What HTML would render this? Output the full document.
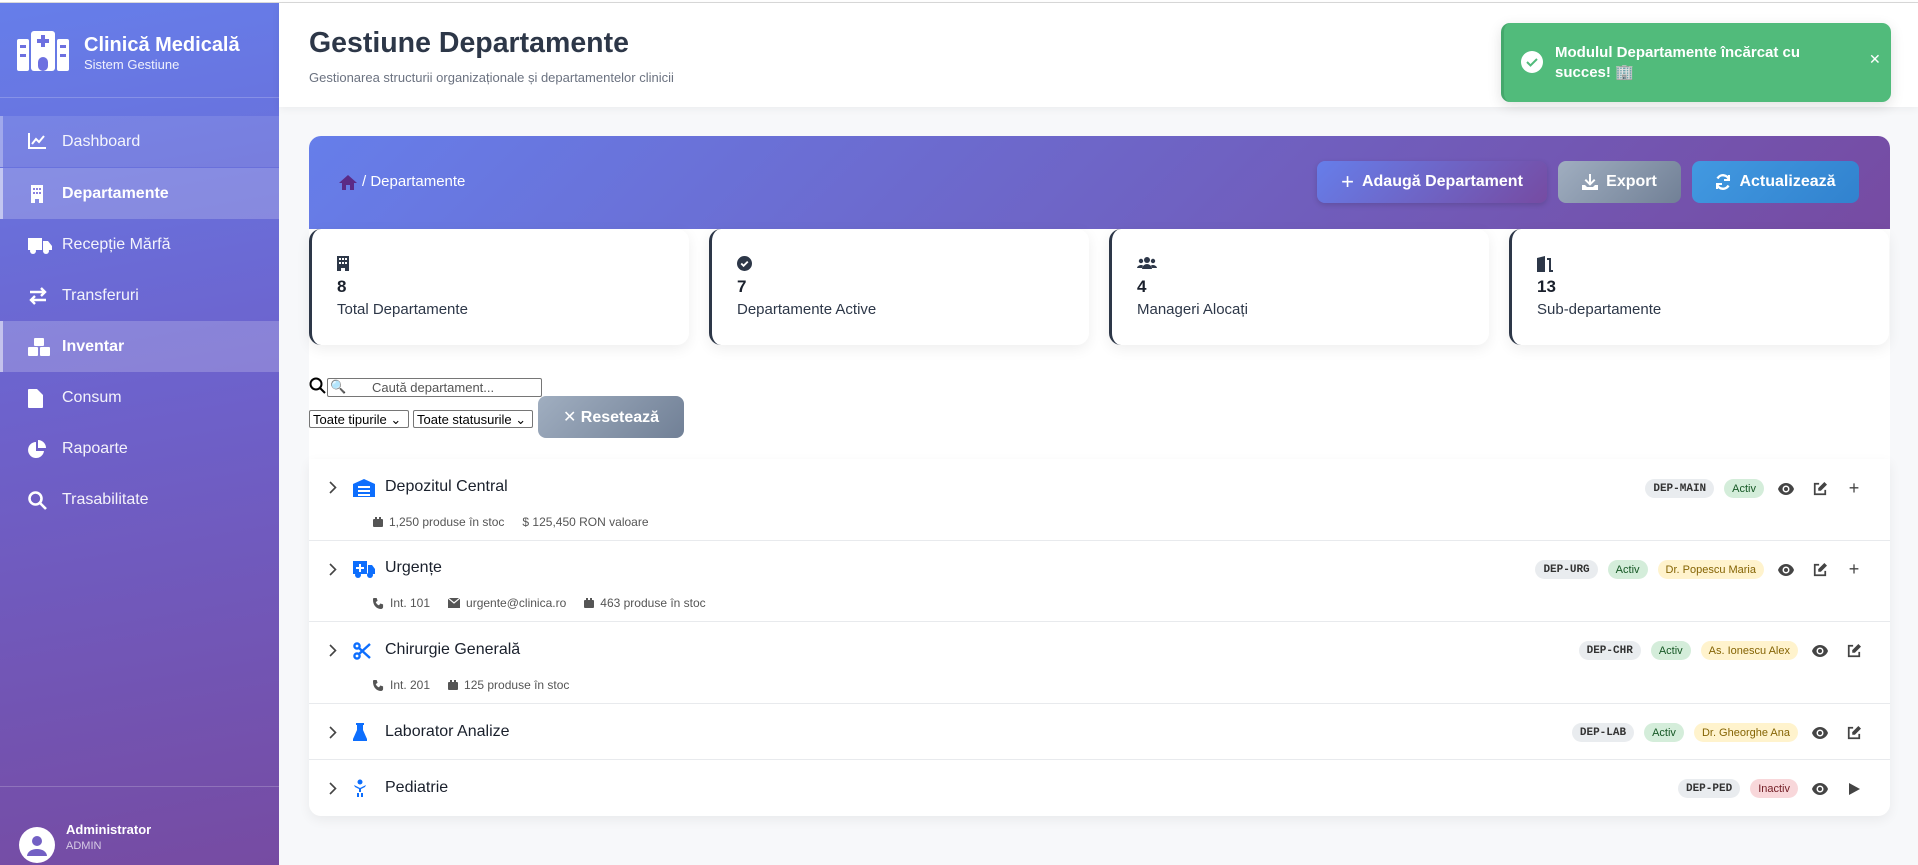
<!DOCTYPE html>
<html><head><meta charset="utf-8"><style>
*{box-sizing:border-box;margin:0;padding:0}
body{width:1918px;height:865px;overflow:hidden;font-family:"Liberation Sans","DejaVu Sans",sans-serif;background:#f7f8fa;position:relative;color:#2d3748}
.sb{position:absolute;left:0;top:3px;width:279px;height:862px;background:linear-gradient(170deg,#667eea 0%,#6d62cc 45%,#764ba2 100%);color:#fff}
.topline{position:absolute;left:0;top:0;width:1918px;height:3px;background:#fff;border-bottom:1px solid #d9d9d9}
.nav{position:absolute;left:0;width:279px;height:51px;display:flex;align-items:center;font-size:16px;color:rgba(255,255,255,.92)}
.nav svg{position:absolute;left:28px;top:17px}
.nav span{position:absolute;left:62px}
.nav.h{background:rgba(255,255,255,.1);box-shadow:inset 3px 0 0 rgba(255,255,255,.3)}
.nav.a{background:rgba(255,255,255,.2);box-shadow:inset 3px 0 0 rgba(255,255,255,.5);font-weight:bold;color:#fff}
.hdr{position:absolute;left:279px;top:3px;width:1639px;height:104px;background:#fff;box-shadow:0 2px 8px rgba(0,0,0,.05)}
.wrap{position:absolute;left:309px;top:136px;width:1581px;height:680px;background:#fff;border-radius:12px}
.ph{position:absolute;left:0;top:0;width:1581px;height:93px;border-radius:12px 12px 0 0;background:linear-gradient(135deg,#667eea,#764ba2)}
.btn{position:absolute;top:25px;height:42px;border-radius:8px;color:#fff;font-weight:bold;font-size:16px;display:flex;align-items:center;justify-content:center;gap:8px}
.stat{position:absolute;top:93px;width:380px;height:116px;background:#fff;border-radius:12px;border-left:3px solid #2d3748;box-shadow:0 4px 14px rgba(0,0,0,.07)}
.stat .ic{position:absolute;left:25px;top:27px}
.stat .n{position:absolute;left:25px;top:48px;font-size:17px;font-weight:bold;color:#1a202c}
.stat .l{position:absolute;left:25px;top:72px;font-size:15px;color:#2d3748}
.list{position:absolute;left:309px;top:459px;width:1581px;height:357px;background:#fff;border-radius:0 0 12px 12px;box-shadow:0 4px 12px rgba(0,0,0,.06)}
.row{position:absolute;left:0;width:1581px;border-bottom:1px solid #e8eaed}
.row .chev{position:absolute;left:20px}
.row .di{position:absolute;left:44px}
.row .nm{position:absolute;left:76px;font-size:16px;color:#1a202c}
.meta{position:absolute;left:64px;font-size:12px;color:#555;display:flex;gap:18px;align-items:center}
.meta span{display:flex;align-items:center;gap:6px}
.rt{position:absolute;right:24px;display:flex;align-items:center;gap:10px}
.b{height:19px;border-radius:10px;padding:0 8px;font-size:11px;display:flex;align-items:center}
.code{background:#e9ecef;color:#333;font-family:"Liberation Mono",monospace;font-weight:bold}
.ok{background:#d4edda;color:#155724}
.mg{background:#fff3cd;color:#856404}
.in{background:#f8d7da;color:#721c24}
.ib{width:24px;display:flex;justify-content:center;color:#444}
.ib:first-of-type{margin-left:4px}
</style></head><body>
<svg width="0" height="0" style="position:absolute"><defs>
<symbol id="eye" viewBox="0 0 16 12"><path d="M8 0C4 0 1 3 0 6c1 3 4 6 8 6s7-3 8-6c-1-3-4-6-8-6z" fill="#444"/><circle cx="8" cy="6" r="3.5" fill="#fff"/><circle cx="8" cy="6" r="2" fill="#444"/></symbol>
<symbol id="ed" viewBox="0 0 16 16"><path d="M7 2H2v12h12V9" fill="none" stroke="#444" stroke-width="2"/><path d="M13 0l3 3-7 7H6V7z" fill="#444"/></symbol>
<symbol id="box" viewBox="0 0 10 10"><rect x="0" y="2" width="10" height="8" rx="1" fill="#555"/><rect x="2" y="0" width="2" height="3" fill="#555"/><rect x="6" y="0" width="2" height="3" fill="#555"/></symbol>
<symbol id="ph" viewBox="0 0 12 12"><path d="M1 0l3 0 1 3-2 1.5c1 2 2 3 3.5 3.5L8 6l3 1 0 3c0 1-1 2-2 2C4 12 0 8 0 2 0 1 0 0 1 0z" fill="#555"/></symbol>
<symbol id="mail" viewBox="0 0 12 10"><path d="M0 0h12v10H0z" fill="#555"/><path d="M0 0l6 5 6-5" stroke="#fff" stroke-width="1.2" fill="none"/></symbol>
</defs></svg>
<div class="topline"></div>
<div class="sb">
 <svg style="position:absolute;left:17px;top:28px" width="52" height="40" viewBox="0 0 52 40" fill="#fff"><rect x="0" y="8" width="12" height="32" rx="2"/><rect x="40" y="8" width="12" height="32" rx="2"/><rect x="14" y="0" width="24" height="40" rx="3"/><g fill="#6d70e0"><rect x="24" y="4" width="4" height="12"/><rect x="20" y="8" width="12" height="4"/><rect x="21" y="26" width="10" height="14" rx="5"/><rect x="3" y="14" width="6" height="3"/><rect x="3" y="23" width="6" height="3"/><rect x="43" y="14" width="6" height="3"/><rect x="43" y="23" width="6" height="3"/></g></svg>
 <div style="position:absolute;left:84px;top:31px;font-size:20px;font-weight:bold">Clinică Medicală</div>
 <div style="position:absolute;left:84px;top:54px;font-size:13px;opacity:.9">Sistem Gestiune</div>
 <div style="position:absolute;left:0;top:94px;width:279px;height:1px;background:rgba(255,255,255,.2)"></div>
 <div class="nav h" style="top:113px"><svg width="18" height="16" viewBox="0 0 18 16" fill="none" stroke="#fff" stroke-width="2"><path d="M1 0v15h17M4 11l4-5 3 3 5-6"/></svg><span>Dashboard</span></div>
 <div class="nav a" style="top:165px"><svg width="18" height="18" viewBox="0 0 14 18" fill="#fff"><path d="M1 0h12v18H9v-4H5v4H1z"/><g fill="#8b80e0"><rect x="3" y="3" width="2" height="2"/><rect x="6" y="3" width="2" height="2"/><rect x="9" y="3" width="2" height="2"/><rect x="3" y="7" width="2" height="2"/><rect x="6" y="7" width="2" height="2"/><rect x="9" y="7" width="2" height="2"/></g></svg><span>Departamente</span></div>
 <div class="nav" style="top:216px"><svg width="24" height="18" viewBox="0 0 24 18" fill="#fff"><path d="M0 2h14v12H0zM15 5h5l4 5v4h-9z"/><circle cx="5" cy="15" r="3"/><circle cx="18" cy="15" r="3"/></svg><span>Recepție Mărfă</span></div>
 <div class="nav" style="top:267px"><svg width="20" height="18" viewBox="0 0 20 18" fill="none" stroke="#fff" stroke-width="2.4"><path d="M2 5h15M13 1l4 4-4 4M18 13H3M7 9l-4 4 4 4"/></svg><span>Transferuri</span></div>
 <div class="nav a" style="top:318px"><svg width="22" height="18" viewBox="0 0 22 18" fill="#fff"><rect x="6" y="0" width="10" height="8" rx="1"/><rect x="0" y="9" width="10" height="9" rx="1"/><rect x="12" y="9" width="10" height="9" rx="1"/></svg><span>Inventar</span></div>
 <div class="nav" style="top:369px"><svg width="15" height="19" viewBox="0 0 15 19" fill="#fff"><path d="M0 1a1 1 0 011-1h8l6 6v12a1 1 0 01-1 1H1a1 1 0 01-1-1z"/></svg><span>Consum</span></div>
 <div class="nav" style="top:420px"><svg width="19" height="19" viewBox="0 0 19 19" fill="#fff"><path d="M8 2a8 8 0 108 9H8z"/><path d="M10 0a8 8 0 018 8h-8z"/></svg><span>Rapoarte</span></div>
 <div class="nav" style="top:471px"><svg width="19" height="19" viewBox="0 0 19 19" fill="none" stroke="#fff" stroke-width="2.6"><circle cx="7.5" cy="7.5" r="6"/><path d="M12 12l6 6"/></svg><span>Trasabilitate</span></div>
 <div style="position:absolute;left:0;top:783px;width:279px;height:1px;background:rgba(255,255,255,.2)"></div>
 <svg style="position:absolute;left:19px;top:824px" width="36" height="36" viewBox="0 0 36 36"><circle cx="18" cy="18" r="18" fill="#fff"/><circle cx="18" cy="14" r="5" fill="#7360c4"/><path d="M8 29a10 7 0 0120 0z" fill="#7360c4"/></svg>
 <div style="position:absolute;left:66px;top:819px;font-size:13px;font-weight:bold">Administrator</div>
 <div style="position:absolute;left:66px;top:837px;font-size:11px;opacity:.7">ADMIN</div>
</div>
<div class="hdr">
 <div style="position:absolute;left:30px;top:24px;font-size:28.5px;font-weight:bold;color:#2d3748">Gestiune Departamente</div>
 <div style="position:absolute;left:30px;top:67px;font-size:13px;color:#6b7280">Gestionarea structurii organizaționale și departamentelor clinicii</div>
</div>
<div style="position:absolute;left:1501px;top:23px;width:390px;height:79px;background:#51bb7b;border-radius:9px;border-left:3px solid #44a86c;box-shadow:0 4px 14px rgba(0,0,0,.12);color:#fff">
 <svg style="position:absolute;left:17px;top:28px" width="22" height="22" viewBox="0 0 22 22"><circle cx="11" cy="11" r="11" fill="#fff"/><path d="M6 11l3.5 3.5L16 8" stroke="#51bb7b" stroke-width="2" fill="none"/></svg>
 <div style="position:absolute;left:51px;top:20px;font-size:15px;font-weight:bold;line-height:20px">Modulul Departamente încărcat cu<br>succes! 🏢</div>
 <div style="position:absolute;left:365px;top:28px;font-size:14px">✕</div>
</div>
<div class="wrap">
 <div class="ph">
  <svg style="position:absolute;left:30px;top:39px" width="18" height="15" viewBox="0 0 18 15" fill="#5b2a86"><path d="M9 0l9 8h-3v7h-4v-5H7v5H3V8H0z"/></svg>
  <div style="position:absolute;left:53px;top:37px;font-size:15px;color:#fff">/ Departamente</div>
  <div class="btn" style="left:1008px;width:230px;background:linear-gradient(135deg,#667eea,#764ba2);box-shadow:0 2px 6px rgba(0,0,0,.15)"><span style="font-size:22px;font-weight:normal">+</span>Adaugă Departament</div>
  <div class="btn" style="left:1249px;width:123px;background:linear-gradient(135deg,#a0aec0,#718096)"><svg width="16" height="16" viewBox="0 0 16 16" fill="#fff"><path d="M7 0h2v8l3-3 1.4 1.4L8 11.8 2.6 6.4 4 5l3 3z"/><path d="M0 11h3l2 2h6l2-2h3v5H0z"/></svg>Export</div>
  <div class="btn" style="left:1383px;width:167px;background:linear-gradient(135deg,#4299e1,#3182ce)"><svg width="16" height="16" viewBox="0 0 16 16" fill="none" stroke="#fff" stroke-width="2.4"><path d="M14 6A6.2 6.2 0 002.5 4.5M2 10a6.2 6.2 0 0011.5 1.5"/><path d="M14 1v5H9M2 15v-5h5" stroke-width="2"/></svg>Actualizează</div>
 </div>
 <div class="stat" style="left:0"><svg class="ic" width="12" height="15" viewBox="0 0 12 15" fill="#2d3748"><path d="M0 0h12v15H8v-3H4v3H0z"/><g fill="#fff"><rect x="2" y="2" width="2" height="2"/><rect x="5" y="2" width="2" height="2"/><rect x="8" y="2" width="2" height="2"/><rect x="2" y="6" width="2" height="2"/><rect x="5" y="6" width="2" height="2"/><rect x="8" y="6" width="2" height="2"/></g></svg><div class="n">8</div><div class="l">Total Departamente</div></div>
 <div class="stat" style="left:400px"><svg class="ic" width="15" height="15" viewBox="0 0 16 16"><circle cx="8" cy="8" r="8" fill="#2d3748"/><path d="M4.5 8l2.5 2.5L11.5 6" stroke="#fff" stroke-width="2" fill="none"/></svg><div class="n">7</div><div class="l">Departamente Active</div></div>
 <div class="stat" style="left:800px"><svg class="ic" width="20" height="14" viewBox="0 0 20 14" fill="#2d3748"><circle cx="10" cy="4" r="3"/><circle cx="4" cy="5" r="2.2"/><circle cx="16" cy="5" r="2.2"/><path d="M5 13a5 5 0 0110 0zM0 12a4 3.5 0 016-2.5L5 12zM20 12a4 3.5 0 00-6-2.5l1 2.5z"/></svg><div class="n">4</div><div class="l">Manageri Alocați</div></div>
 <div class="stat" style="left:1200px"><svg class="ic" width="16" height="16" viewBox="0 0 16 16" fill="#2d3748"><path d="M0 15V2l8-2v16H0zM10 2h4v12h2v2h-4V4h-2z"/></svg><div class="n">13</div><div class="l">Sub-departamente</div></div>
 <svg style="position:absolute;left:0;top:241px" width="17" height="17" viewBox="0 0 17 17" fill="none" stroke="#000" stroke-width="2"><circle cx="7" cy="7" r="5.5"/><path d="M11 11l5 5"/></svg>
 <div style="position:absolute;left:18px;top:242px;width:215px;height:19px;border:1px solid #767676;border-radius:2px;background:#fff;font-size:13px;color:#555"><span style="position:absolute;left:2px;top:0">🔍</span><span style="position:absolute;left:44px;top:1px">Caută departament...</span></div>
 <div style="position:absolute;left:0;top:274px;width:100px;height:18px;border:1px solid #767676;border-radius:2px;font-size:13px;color:#000;padding:1px 3px">Toate tipurile ⌄</div>
 <div style="position:absolute;left:104px;top:274px;width:120px;height:18px;border:1px solid #767676;border-radius:2px;font-size:13px;color:#000;padding:1px 3px">Toate statusurile ⌄</div>
 <div class="btn" style="left:229px;top:260px;width:146px;height:42px;background:linear-gradient(135deg,#a0aec0,#718096)">✕ Resetează</div>
</div>
<div class="list">
 <div class="row" style="top:0;height:82px">
  <svg class="chev" style="top:22px" width="8" height="13" viewBox="0 0 8 13" fill="none" stroke="#444" stroke-width="1.6"><path d="M1 1l5.5 5.5L1 12"/></svg>
  <svg class="di" style="top:20px" width="22" height="18" viewBox="0 0 22 18" fill="#0d6efd"><path d="M0 5L11 0l11 5v13H0z"/><g fill="#fff"><rect x="5" y="7" width="12" height="2"/><rect x="5" y="11" width="12" height="2"/><rect x="5" y="15" width="12" height="2"/></g></svg>
  <div class="nm" style="top:19px">Depozitul Central</div>
  <div class="meta" style="top:56px"><span><svg width="10" height="10"><use href="#box"/></svg>1,250 produse în stoc</span><span>$ 125,450 RON valoare</span></div>
  <div class="rt" style="top:19px"><div class="b code">DEP-MAIN</div><div class="b ok">Activ</div><div class="ib"><svg width="16" height="12"><use href="#eye"/></svg></div><div class="ib"><svg width="14" height="14"><use href="#ed"/></svg></div><div class="ib" style="font-size:18px">+</div></div>
 </div>
 <div class="row" style="top:82px;height:81px">
  <svg class="chev" style="top:22px" width="8" height="13" viewBox="0 0 8 13" fill="none" stroke="#444" stroke-width="1.6"><path d="M1 1l5.5 5.5L1 12"/></svg>
  <svg class="di" style="top:19px" width="22" height="18" viewBox="0 0 22 18" fill="#0d6efd"><path d="M0 1h14v13H0zM15 5h4l3 4v5h-7z"/><circle cx="5" cy="15" r="3"/><circle cx="17" cy="15" r="3"/><path d="M6 4h2v3h3v2H8v3H6V9H3V7h3z" fill="#fff"/></svg>
  <div class="nm" style="top:18px">Urgențe</div>
  <div class="meta" style="top:55px"><span><svg width="11" height="11"><use href="#ph"/></svg>Int. 101</span><span><svg width="12" height="10"><use href="#mail"/></svg>urgente@clinica.ro</span><span><svg width="10" height="10"><use href="#box"/></svg>463 produse în stoc</span></div>
  <div class="rt" style="top:18px"><div class="b code">DEP-URG</div><div class="b ok">Activ</div><div class="b mg">Dr. Popescu Maria</div><div class="ib"><svg width="16" height="12"><use href="#eye"/></svg></div><div class="ib"><svg width="14" height="14"><use href="#ed"/></svg></div><div class="ib" style="font-size:18px">+</div></div>
 </div>
 <div class="row" style="top:163px;height:82px">
  <svg class="chev" style="top:22px" width="8" height="13" viewBox="0 0 8 13" fill="none" stroke="#444" stroke-width="1.6"><path d="M1 1l5.5 5.5L1 12"/></svg>
  <svg class="di" style="top:20px" width="18" height="18" viewBox="0 0 18 18" fill="none" stroke="#0d6efd" stroke-width="2.4"><circle cx="4" cy="4" r="2.6"/><circle cx="4" cy="14" r="2.6"/><path d="M6 6l11 10M6 12l11-10"/></svg>
  <div class="nm" style="top:19px">Chirurgie Generală</div>
  <div class="meta" style="top:56px"><span><svg width="11" height="11"><use href="#ph"/></svg>Int. 201</span><span><svg width="10" height="10"><use href="#box"/></svg>125 produse în stoc</span></div>
  <div class="rt" style="top:19px"><div class="b code">DEP-CHR</div><div class="b ok">Activ</div><div class="b mg">As. Ionescu Alex</div><div class="ib"><svg width="16" height="12"><use href="#eye"/></svg></div><div class="ib"><svg width="14" height="14"><use href="#ed"/></svg></div></div>
 </div>
 <div class="row" style="top:245px;height:56px">
  <svg class="chev" style="top:22px" width="8" height="13" viewBox="0 0 8 13" fill="none" stroke="#444" stroke-width="1.6"><path d="M1 1l5.5 5.5L1 12"/></svg>
  <svg class="di" style="top:19px" width="14" height="18" viewBox="0 0 14 18" fill="#0d6efd"><path d="M3 0h8v2h-1v5l4 9v2H0v-2l4-9V2H3z"/></svg>
  <div class="nm" style="top:19px">Laborator Analize</div>
  <div class="rt" style="top:19px"><div class="b code">DEP-LAB</div><div class="b ok">Activ</div><div class="b mg">Dr. Gheorghe Ana</div><div class="ib"><svg width="16" height="12"><use href="#eye"/></svg></div><div class="ib"><svg width="14" height="14"><use href="#ed"/></svg></div></div>
 </div>
 <div class="row" style="top:301px;height:56px;border-bottom:none">
  <svg class="chev" style="top:22px" width="8" height="13" viewBox="0 0 8 13" fill="none" stroke="#444" stroke-width="1.6"><path d="M1 1l5.5 5.5L1 12"/></svg>
  <svg class="di" style="top:19px" width="14" height="18" viewBox="0 0 14 18" fill="#0d6efd"><circle cx="7" cy="3" r="2.5"/><path d="M1 6l6 3 6-3-1 2-4 2v3H6v-3L2 8zM4 14h2v4H4zM8 14h2v4H8z"/></svg>
  <div class="nm" style="top:19px">Pediatrie</div>
  <div class="rt" style="top:19px"><div class="b code">DEP-PED</div><div class="b in">Inactiv</div><div class="ib"><svg width="16" height="12"><use href="#eye"/></svg></div><div class="ib"><svg width="11" height="12" viewBox="0 0 11 12"><path d="M0 0l11 6-11 6z" fill="#444"/></svg></div></div>
 </div>
</div>
</body></html>
